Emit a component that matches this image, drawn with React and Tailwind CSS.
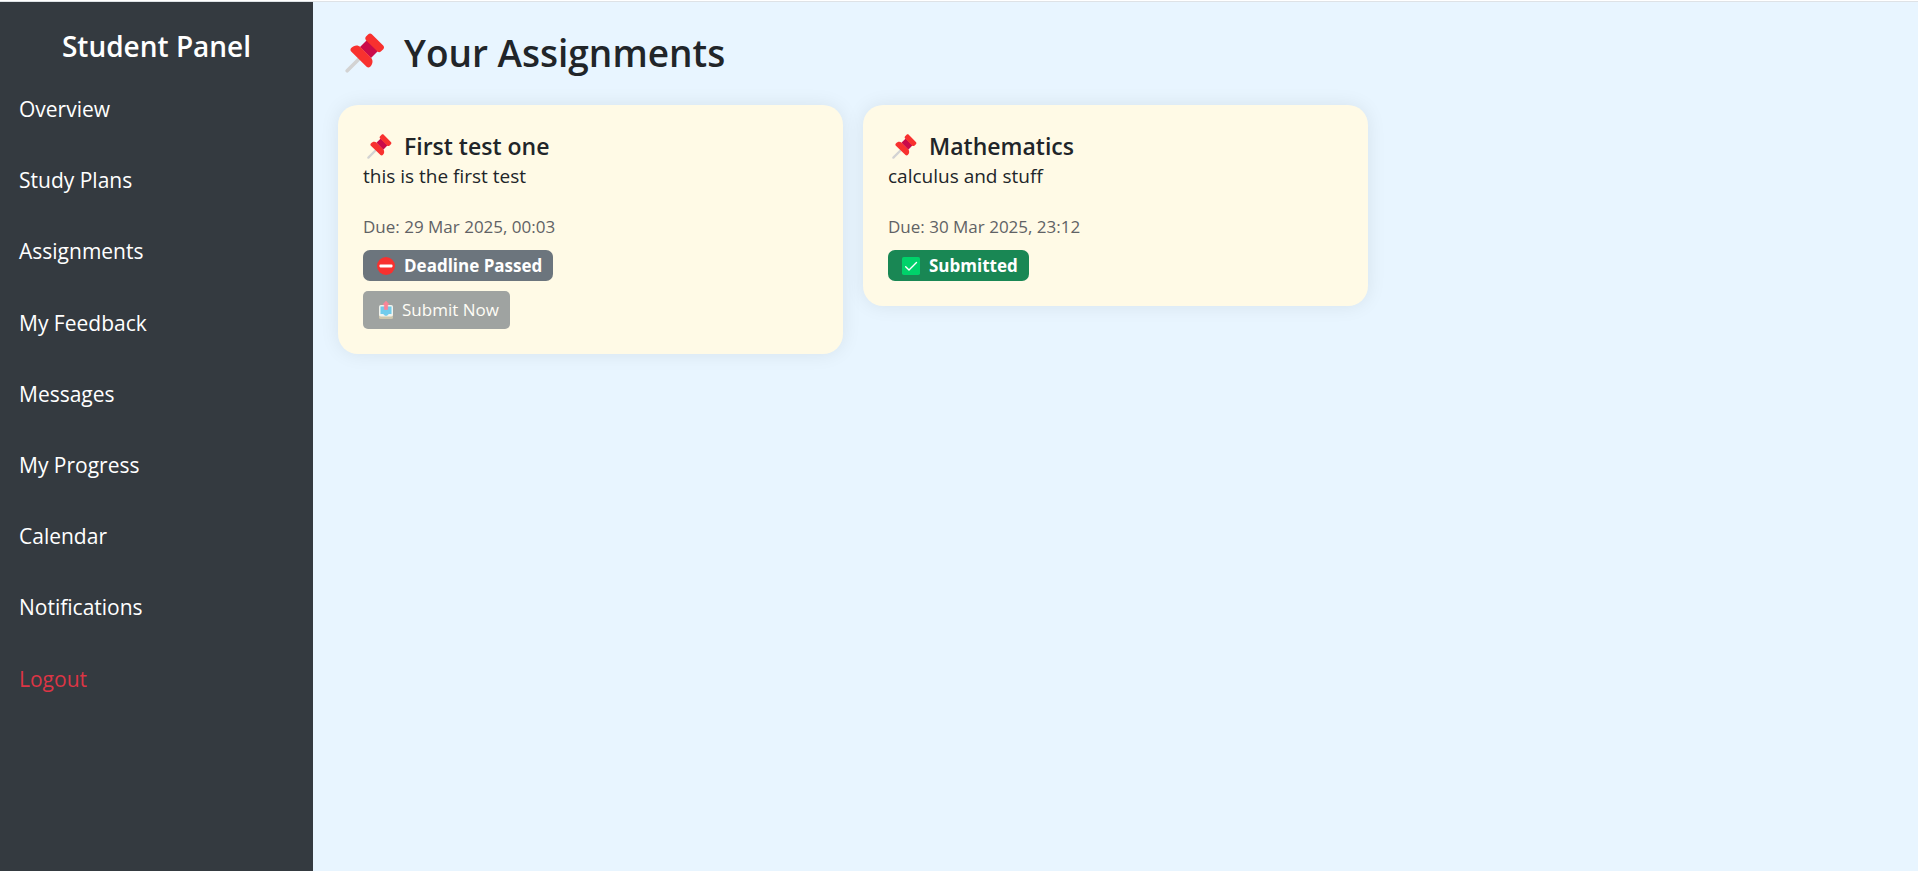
const navItems = [
  'Overview',
  'Study Plans',
  'Assignments',
  'My Feedback',
  'Messages',
  'My Progress',
  'Calendar',
  'Notifications',
];

const assignments = [
  { title: 'First test one', text: 'this is the first test', due: '29 Mar 2025, 00:03', submitted: false },
  { title: 'Mathematics', text: 'calculus and stuff', due: '30 Mar 2025, 23:12', submitted: true },
];

function PinIcon({ className }) {
  return (
    <svg viewBox="0 0 40 40" className={className} aria-hidden="true">
      <path d="M2.2 37.8 16 24" stroke="#d3d3d3" strokeWidth="3.6" strokeLinecap="round" />
      <path d="M15 14 22 7 33 18 26 25Z" fill="#ca0b4a" />
      <path
        d="M21 7.2C20 6 20 4.800 21 3.600L23.300 1.200C24.300.2 25.800.2 26.800 1.200L38.200 12.600C39.300 13.700 39.300 15.200 38.300 16.200L35.800 18.600C34.800 19.500 33.500 19.500 32.500 18.600Z"
        fill="#f8312f"
      />
      <path
        d="M6.200 18.600C5.200 17.500 5.200 16 6.200 15C9 12 13 11.600 15.600 14.200L25.800 24.400C28.400 27 28 31 25.200 33.700C24.200 34.700 22.600 34.700 21.600 33.700Z"
        fill="#f8312f"
      />
    </svg>
  );
}

function NoEntryIcon() {
  return (
    <svg viewBox="0 0 18 18" className="size-[18px] shrink-0" aria-hidden="true">
      <circle cx="9" cy="9" r="9" fill="#f8312f" />
      <rect x="2.500" y="7.600" width="13" height="2.800" rx="0.800" fill="#fff" />
    </svg>
  );
}

function CheckIcon() {
  return (
    <svg viewBox="0 0 18 18" className="size-[18px] shrink-0" aria-hidden="true">
      <rect width="18" height="18" rx="1.800" fill="#00d26a" />
      <path
        d="M3.700 9.700 7 13 14.500 5.400"
        fill="none"
        stroke="#fff"
        strokeWidth="1.400"
        strokeLinecap="round"
        strokeLinejoin="round"
      />
    </svg>
  );
}

function OutboxIcon() {
  return (
    <svg viewBox="0 0 18 18" className="size-[18px] shrink-0" aria-hidden="true">
      <path d="M2 12h14v4.500a1.500 1.500 0 0 1-1.500 1.500h-11A1.500 1.500 0 0 1 2 16.500Z" fill="#b4ac8f" />
      <rect x="2" y="4" width="14" height="11.500" rx="1.800" fill="#e9f0f2" />
      <path d="M3.500 5.500h11v7.500h-2.700L10 14.700H8L6.200 13H3.500Z" fill="#26b5f0" />
      <path d="M9 0 12 3.400h-1.300V8.500H7.300V3.400H6Z" fill="#f8476e" stroke="#f8476e" strokeWidth="0.600" strokeLinejoin="round" />
    </svg>
  );
}

function AssignmentCard({ title, text, due, submitted }) {
  return (
    <article className="rounded-[20px] bg-[#fffae6] px-[25px] pt-[26px] pb-[25px] shadow-[0_0_19px_rgba(0,0,0,0.08)]">
      <h2 className="flex items-center gap-3 pl-1 text-[23px] leading-[30px] font-semibold">
        <PinIcon className="size-[25px] shrink-0" />
        {title}
      </h2>
      <p className="text-[19px] leading-[30px]">{text}</p>
      <p className="mt-[23px] text-[17px] leading-[26px] text-[#5f6265]">Due: {due}</p>
      <div className="mt-[10px] flex flex-col items-start gap-[10px]">
        {submitted ? (
          <span className="flex h-[31px] items-center gap-[9px] rounded-[7px] bg-[#198754] pr-[11px] pl-[14px] text-[17px] font-bold text-white">
            <CheckIcon />
            Submitted
          </span>
        ) : (
          <>
            <span className="flex h-[31px] items-center gap-[9px] rounded-[7px] bg-[#6c757d] pr-[11px] pl-[14px] text-[17px] font-bold text-white">
              <NoEntryIcon />
              Deadline Passed
            </span>
            <button
              type="button"
              disabled
              className="flex h-[38px] items-center gap-[7px] rounded-[5px] bg-[#6c757d] pr-[11px] pl-[14px] text-[17px] text-white opacity-65"
            >
              <OutboxIcon />
              Submit Now
            </button>
          </>
        )}
      </div>
    </article>
  );
}

export default function App() {
  return (
    <div className="flex min-h-screen flex-col bg-[#e8f5ff] font-['Open_Sans','Noto_Sans',sans-serif] text-[#212529]">
      <div className="h-[2px] border-b border-[#dee2e6] bg-white" />
      <div className="flex grow">
        <aside className="w-[313px] shrink-0 bg-[#343a40] pt-[26px] text-white">
          <h2 className="text-center text-[28px] leading-[36px] font-semibold">Student Panel</h2>
          <nav className="mt-[10px] grid h-[641px] auto-rows-fr text-[21px]">
            {navItems.map((item) => (
              <a key={item} href="#" className="flex items-center px-[19px]">
                {item}
              </a>
            ))}
            <a href="#" className="flex items-center px-[19px] text-[#dc3545]">
              Logout
            </a>
          </nav>
        </aside>
        <main className="grow px-[25px] pt-[27px]">
          <h1 className="flex items-center gap-[19px] pl-[7px] text-[37px] leading-[48px] font-semibold">
            <PinIcon className="size-10 shrink-0" />
            Your Assignments
          </h1>
          <div className="mt-[28px] grid grid-cols-3 items-start gap-5">
            {assignments.map((item) => (
              <AssignmentCard key={item.title} {...item} />
            ))}
          </div>
        </main>
      </div>
    </div>
  );
}
